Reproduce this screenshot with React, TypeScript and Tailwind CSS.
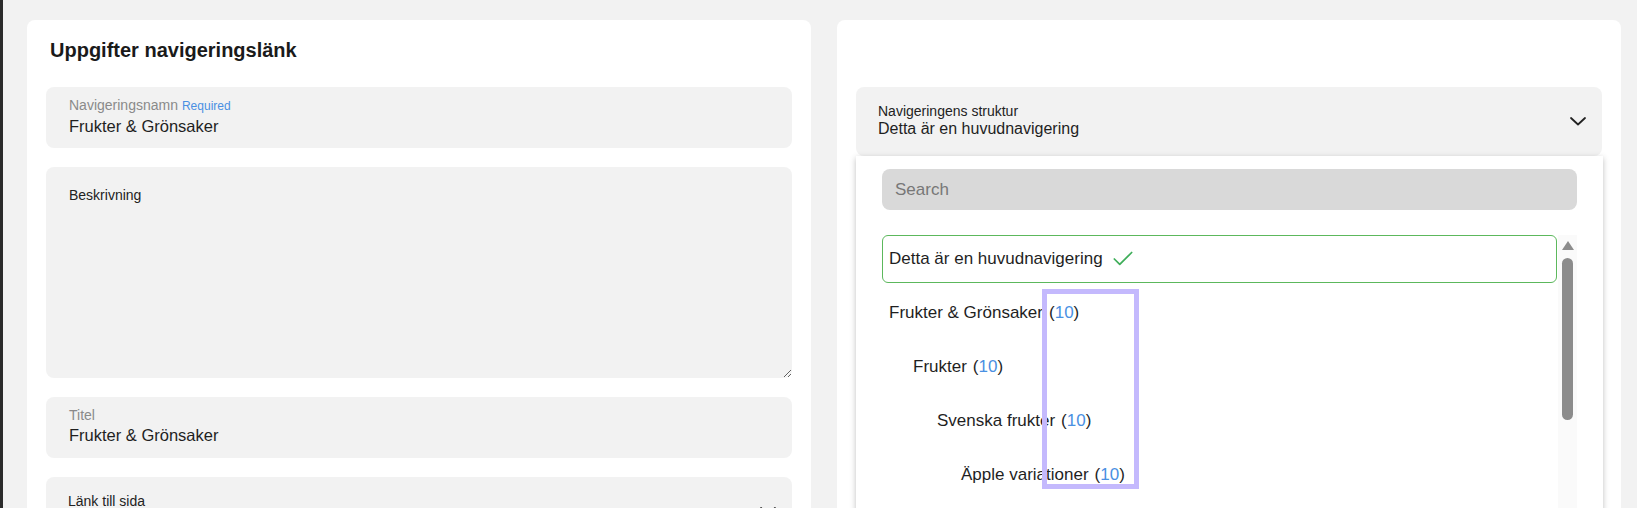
import React from "react";
import { Check } from "lucide-react";

const font = { fontFamily: '"Liberation Sans", Arial, sans-serif' };

function Chevron() {
  return (
    <svg width="16" height="9" viewBox="0 0 16 9" fill="none" className="shrink-0">
      <polyline points="1,1 8,7.5 15,1" stroke="#222" strokeWidth="1.8" strokeLinecap="round" strokeLinejoin="round" />
    </svg>
  );
}

function TextField({ label, value, required }: { label: string; value: string; required?: boolean }) {
  return (
    <div className="h-[61px] rounded-lg bg-[#f2f2f2] pl-[23px] pt-[10px]">
      <div className="text-[14px] leading-[16px] text-[#8a8a8a]">
        {label}
        {required && <span className="ml-[4px] text-[12px] text-[#4a90e2]">Required</span>}
      </div>
      <div className="mt-[2px] text-[16.5px] leading-[20px] text-[#1f1f1f]">{value}</div>
    </div>
  );
}

function SelectField({ label, value, children }: { label: string; value?: string; children?: React.ReactNode }) {
  return (
    <div className="relative">
      <div className="flex h-[69px] items-center justify-between rounded-lg bg-[#f2f2f2] pl-[22px] pr-[16px]">
        <div className="self-start pt-[16px]">
          <div className="text-[14px] leading-[16px] text-[#222]">{label}</div>
          {value && <div className="text-[16px] leading-[20px] text-[#1f1f1f]">{value}</div>}
        </div>
        <Chevron />
      </div>
      {children}
    </div>
  );
}

type Item = { name: string; level: number; count?: number; selected?: boolean };

const items: Item[] = [
  { name: "Detta är en huvudnavigering", level: 0, selected: true },
  { name: "Frukter & Grönsaker", level: 0, count: 10 },
  { name: "Frukter", level: 1, count: 10 },
  { name: "Svenska frukter", level: 2, count: 10 },
  { name: "Äpple variationer", level: 3, count: 10 },
];

const indent = ["pl-[7px]", "pl-[31px]", "pl-[55px]", "pl-[79px]"];

function Dropdown() {
  return (
    <div className="absolute left-0 right-[-1px] top-full z-10 h-[420px] bg-white px-[26px] pt-[13px] shadow-[0_2px_6px_rgba(0,0,0,0.25)]">
      <input
        placeholder="Search"
        className="h-[41px] w-full rounded-lg bg-[#d9d9d9] px-[13px] text-[17px] text-[#222] outline-none placeholder:text-[#777]"
        style={font}
      />
      <div className="relative mt-[25px] flex">
        <div className="flex flex-1 flex-col gap-[6px]">
          {items.map((it) => (
            <div
              key={it.name}
              className={
                "flex h-[48px] items-center text-[17px] text-[#1f1f1f] " +
                (it.selected ? "rounded-md border border-[#5cb85c] pl-[6px]" : indent[it.level])
              }
            >
              {it.name}
              {it.count !== undefined && (
                <span className="ml-[6px]">
                  (<span className="text-[#4a90e2]">{it.count}</span>)
                </span>
              )}
              {it.selected && <Check size={26} strokeWidth={1.6} className="ml-[7px] text-[#3fae5a]" />}
            </div>
          ))}
        </div>
        <div className="ml-[1px] flex w-[19px] flex-col items-center bg-[#fafafa] pt-[6px] pb-[200px]">
          <div className="h-0 w-0 border-x-[6px] border-b-[9px] border-x-transparent border-b-[#8c8c8c]" />
          <div className="mt-[8px] h-[162px] w-[11px] rounded-full bg-[#8c8c8c]" />
        </div>
        <div className="pointer-events-none absolute left-[160px] top-[54px] h-[200px] w-[97px] border-[5px] border-[#c4b9fd]" />
      </div>
    </div>
  );
}

export default function App() {
  return (
    <div className="flex h-[508px] overflow-hidden bg-[#f2f2f2]" style={font}>
      <div className="w-[3px] shrink-0 bg-[#2b2b2b]" />
      <div className="flex flex-1 gap-[26px] pl-[24px] pr-[16px] pt-[20px]">
        <div className="h-[620px] w-[784px] rounded-lg bg-white px-[19px] pt-[19px]">
          <h1 className="ml-[4px] h-[22px] text-[20px] font-bold leading-[22px] text-[#1a1a1a]">
            Uppgifter navigeringslänk
          </h1>
          <div className="mt-[26px] flex flex-col gap-[19px]">
            <TextField label="Navigeringsnamn" value="Frukter & Grönsaker" required />
            <div className="flex h-[211px] flex-col rounded-lg bg-[#f2f2f2]">
              <div className="pl-[23px] pt-[20px] text-[14px] leading-[16px] text-[#222]">Beskrivning</div>
              <textarea className="w-full flex-1 bg-transparent px-[23px] text-[16px] outline-none" />
            </div>
            <TextField label="Titel" value="Frukter & Grönsaker" />
            <SelectField label="Länk till sida" />
          </div>
        </div>
        <div className="h-[620px] w-[784px] rounded-lg bg-white px-[19px] pt-[19px]">
          <div className="h-[22px]" />
          <div className="mt-[26px]">
            <SelectField label="Navigeringens struktur" value="Detta är en huvudnavigering">
              <Dropdown />
            </SelectField>
          </div>
        </div>
      </div>
    </div>
  );
}
